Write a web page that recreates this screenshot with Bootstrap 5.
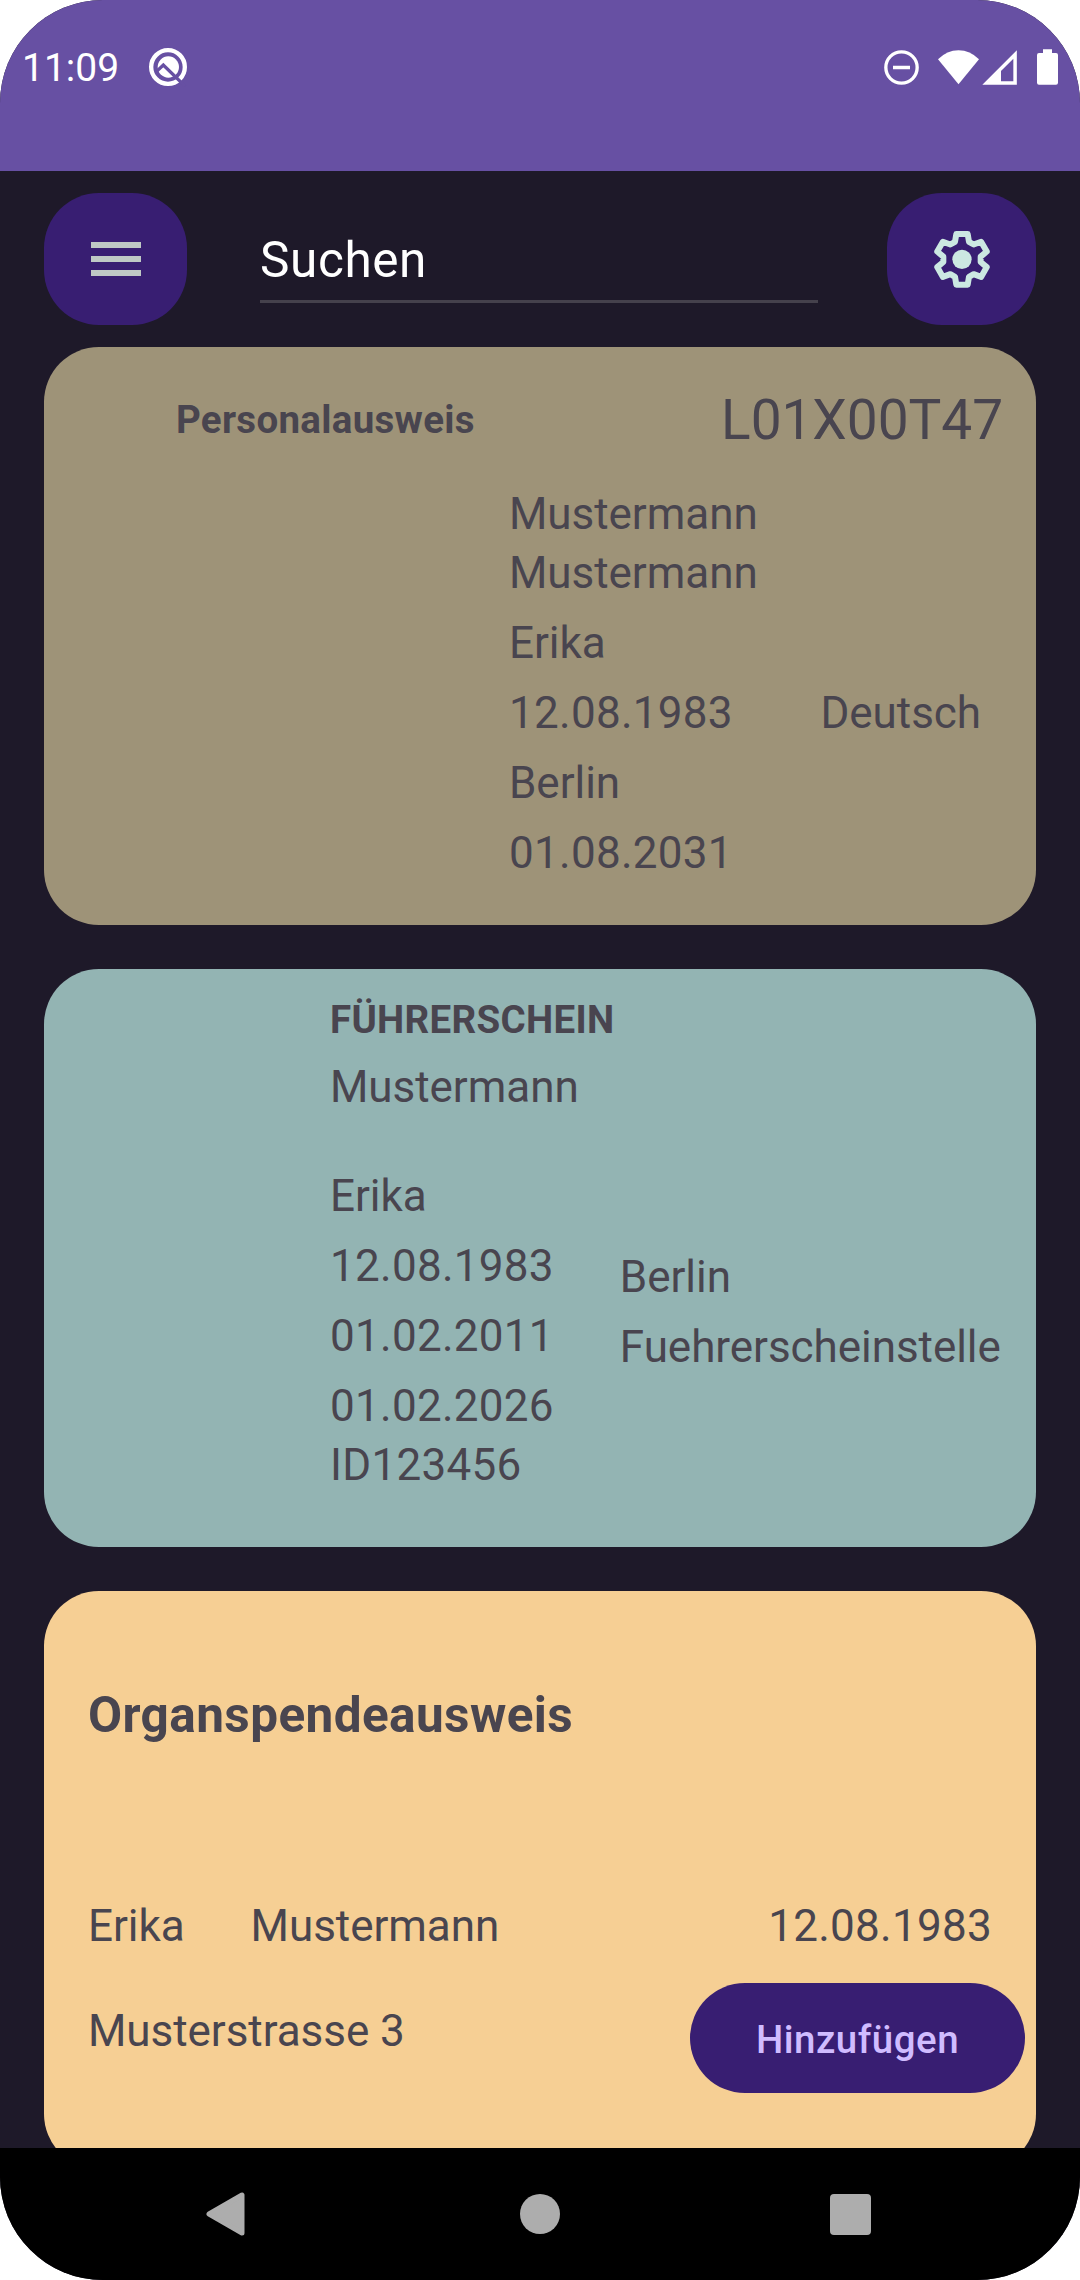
<!DOCTYPE html>
<html lang="de">
<head>
<meta charset="utf-8">
<meta name="viewport" content="width=device-width, initial-scale=1">
<title>Ausweise</title>
<link href="https://cdn.jsdelivr.net/npm/bootstrap@5.3.0/dist/css/bootstrap.min.css" rel="stylesheet">
<style>
html,body{margin:0;background:#fff}
body{font-family:Roboto,"Noto Sans",sans-serif;color:#49454f;overflow:hidden}
svg{display:block;flex:none}
.screen{width:1080px;height:2280px;border-radius:103px;background:#1e1929}
.statusbar{height:171px;background:#6750a3;color:#fff;padding:42px 21px 0 22px}
.clock{font-size:39px;line-height:52px}
.notice{margin:5px 0 0 29px}
.signals{padding-top:8px}
.wifi{margin-left:17px}
.cell{margin-left:2px}
.battery{margin-left:19px}
.topbar{height:176px;padding:22px 44px 0}
.tool{height:132px;border-radius:55px;background:#381e72;border:0}
.tool-menu{width:143px}
.tool-gear{width:149px}
.search{width:558px;height:110px;margin-left:73px;border:0;border-bottom:3px solid #45414c;border-radius:0;background:transparent;color:#fff;font-size:49.5px;line-height:66px;letter-spacing:.6px;padding:34px 0 7px}
.search::placeholder{color:#fff;opacity:1}
.feed{height:1801px;padding:0 44px;gap:44px}
.pass{height:578px;flex:none;border:0;border-radius:55px;font-size:44px;line-height:59px;letter-spacing:-.05px;color:#49454f}
.pass-id{background:#9e9378;padding:36px 33px 0 132px}
.pass-drive{background:#93b4b3;padding:25px 33px 0 286px}
.pass-organ{background:#f6cf94;padding:91px 44px 0}
.id-data{padding:28px 22px 0 333px}
.drive-head{gap:12px}
.drive-data{padding-top:50px;gap:66px}
.drive-office{padding-top:81px}
.organ-name{margin-top:149px}
.organ-street{margin-top:46px}
.surname{margin-left:66px}
.step{gap:11px}
.num{letter-spacing:.28px}
.fs-s{font-size:38.5px;line-height:52px;letter-spacing:.3px}
.fs-m{font-size:49.5px;line-height:66px;letter-spacing:.4px}
.fs-l{font-size:55px;line-height:74px}
.add{right:55px;top:1983px;width:335px;height:110px;border:0;border-radius:55px;background:#381e72;color:#d0bcff;font-size:38.5px;font-weight:500;letter-spacing:.5px;line-height:52px}
.add span{display:block;padding-top:4px}
.navkeys{height:132px;background:#000;padding:0 209px 0 206px}
.home{margin-left:3px}
</style>
<script src="https://cdn.jsdelivr.net/npm/bootstrap@5.3.0/dist/js/bootstrap.bundle.min.js"></script>
</head>
<body>
<div class="screen d-flex flex-column overflow-hidden position-relative">
  <header class="statusbar d-flex align-items-start">
    <span class="clock">11:09</span>
    <svg class="notice" width="40" height="40" viewBox="0 0 120 120">
      <circle cx="60" cy="60" r="50.5" fill="none" stroke="#fff" stroke-width="13"/>
      <circle cx="61" cy="60" r="32" fill="#fff"/>
      <path d="M25 74L46 54L112 118" fill="none" stroke="#6750a3" stroke-width="10"/>
    </svg>
    <div class="signals d-flex align-items-start ms-auto">
      <svg width="36" height="36" viewBox="492 150 108 108"><circle cx="544.5" cy="202.5" r="47" fill="none" stroke="#fff" stroke-width="10"/><path d="M519 197h51v11h-51z" fill="#fff"/></svg>
      <svg class="wifi" width="43" height="36" viewBox="651 150 129 108"><path d="M654 178Q681 151 715.500 151T777 178L715.500 253Z" fill="#fff"/></svg>
      <svg class="cell" width="35" height="36" viewBox="786 150 105 108"><path fill="#fff" fill-rule="evenodd" d="M787 254.500L890.500 151V254.500ZM843 213V244H880V176Z"/></svg>
      <svg class="battery overflow-visible" width="23" height="36" viewBox="948 150 69 108"><path d="M969 148h27v11h12q6 0 6 6v83q0 6-6 6h-51q-6 0-6-6v-83q0-6 6-6h12z" fill="#fff"/></svg>
    </div>
  </header>
  <div class="topbar d-flex align-items-start">
    <button class="tool tool-menu btn p-0 d-flex align-items-center justify-content-center" aria-label="Menü">
      <svg width="50" height="34" viewBox="0 0 50 34"><path d="M0 0h50v6H0zM0 14h50v6H0zM0 28h50v6H0z" fill="#bfc9c5"/></svg>
    </button>
    <input class="search form-control shadow-none" placeholder="Suchen">
    <button class="tool tool-gear btn p-0 ms-auto d-flex align-items-center justify-content-center" aria-label="Einstellungen">
      <svg width="60" height="60" viewBox="-90 -91 180 180"><path d="M-17-76H17L21-52.500L35-44.500L57.300-52.700L74.300-23.300L56-8V8L74.300 23.300L57.300 52.700L35 44.500L21 52.500L17 76H-17L-21 52.500L-35 44.500L-57.300 52.700L-74.300 23.300L-56 8V-8L-74.300-23.300L-57.300-52.700L-35-44.500L-21-52.500Z" fill="none" stroke="#cce8e2" stroke-width="18" stroke-linejoin="round"/><circle r="29" fill="#cce8e2"/></svg>
    </button>
  </div>
  <main class="feed d-flex flex-column overflow-hidden">
    <section class="pass pass-id card">
      <div class="d-flex justify-content-between align-items-center"><b class="fs-s">Personalausweis</b><span class="fs-l">L01X00T47</span></div>
      <div class="id-data d-flex flex-column step">
        <div>Mustermann<br>Mustermann</div>
        <div>Erika</div>
        <div class="d-flex justify-content-between"><span class="num">12.08.1983</span><span>Deutsch</span></div>
        <div>Berlin</div>
        <div class="num">01.08.2031</div>
      </div>
    </section>
    <section class="pass pass-drive card">
      <div class="drive-head d-flex flex-column"><b class="fs-s">FÜHRERSCHEIN</b><div>Mustermann</div></div>
      <div class="drive-data d-flex">
        <div class="d-flex flex-column step">
          <div>Erika</div>
          <div class="num">12.08.1983</div>
          <div class="num">01.02.2011</div>
          <div class="num">01.02.2026<br>ID123456</div>
        </div>
        <div class="drive-office d-flex flex-column step"><div>Berlin</div><div>Fuehrerscheinstelle</div></div>
      </div>
    </section>
    <section class="pass pass-organ card">
      <b class="fs-m">Organspendeausweis</b>
      <div class="organ-name d-flex"><span>Erika</span><span class="surname">Mustermann</span><span class="num ms-auto">12.08.1983</span></div>
      <div class="organ-street">Musterstrasse 3</div>
    </section>
  </main>
  <button class="add btn position-absolute p-0"><span>Hinzufügen</span></button>
  <footer class="navkeys d-flex align-items-center justify-content-between">
    <svg width="40" height="46" viewBox="0 0 40 46"><path d="M3 23L36 4V42Z" fill="#adadad" stroke="#adadad" stroke-width="5" stroke-linejoin="round"/></svg>
    <svg class="home" width="42" height="42" viewBox="0 0 42 42"><circle cx="21" cy="21" r="20" fill="#adadad"/></svg>
    <svg width="41" height="41" viewBox="0 0 41 41"><rect width="41" height="41" rx="4" fill="#adadad"/></svg>
  </footer>
</div>
</body>
</html>
